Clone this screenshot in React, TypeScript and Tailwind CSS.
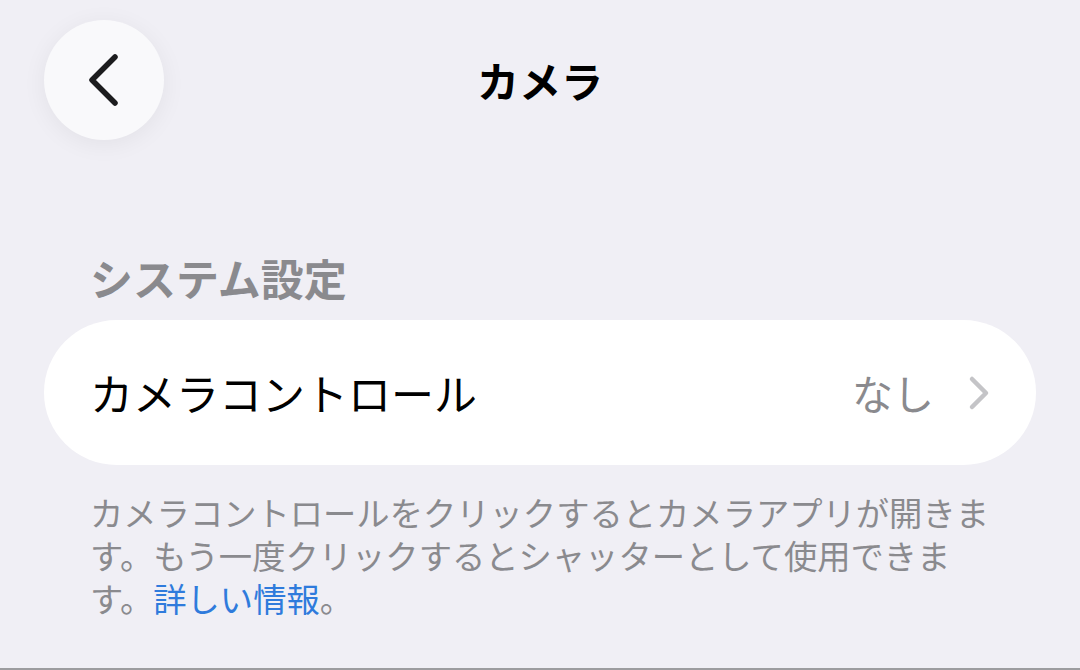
export default function App() {
  return (
    <div
      className="flex h-[670px] w-[1080px] flex-col overflow-hidden bg-[#f0eff5]"
      style={{ fontFamily: '"Noto Sans CJK JP", "Noto Sans", sans-serif' }}
    >
      <div className="grid grid-cols-[120px_1fr_120px] items-center px-[44px] pt-[20px]">
        <button className="flex h-[120px] w-[120px] items-center justify-center rounded-full bg-[#f9f9fb] shadow-[0_4px_24px_rgba(0,0,0,0.06)]">
          <svg width="36" height="56" viewBox="0 0 36 56" fill="none">
            <path d="M29 5L6 28L29 51" stroke="#1c1c1e" strokeWidth="5.5" strokeLinecap="round" strokeLinejoin="round" />
          </svg>
        </button>
        <h1 className="text-center text-[42px] font-bold leading-none text-black">カメラ</h1>
        <div />
      </div>

      <div className="px-[44px]">
        <h2 className="mt-[111px] px-[46px] text-[43px] font-semibold leading-[52px] text-[#8a8a8e]">システム設定</h2>

        <div className="mt-[17px] flex h-[145px] items-center justify-between rounded-full bg-white pl-[46px] pr-[46px]">
          <span className="text-[43px] leading-none text-black">カメラコントロール</span>
          <div className="flex items-center gap-[34px]">
            <span className="text-[41px] leading-none text-[#8a8a8e]">なし</span>
            <svg width="22" height="36" viewBox="0 0 22 36" fill="none">
              <path d="M4 4L18 18L4 32" stroke="#c4c4c7" strokeWidth="4.5" strokeLinecap="round" strokeLinejoin="round" />
            </svg>
          </div>
        </div>

        <div className="mt-[25px] flex flex-col whitespace-nowrap px-[46px] text-[33.3px] leading-[43px] text-[#8a8a8e]">
          <div className="h-[43px]">カメラコントロールをクリックするとカメラアプリが開きま</div>
          <div className="h-[43px]">す。もう一度クリックするとシャッターとして使用できま</div>
          <div className="h-[43px]">
            す。<span className="inline-block text-[#2f7bdc]">詳しい情報</span>。
          </div>
        </div>
      </div>

      <div className="mt-auto h-[2px] bg-[#9c9c9f]" />
    </div>
  );
}
